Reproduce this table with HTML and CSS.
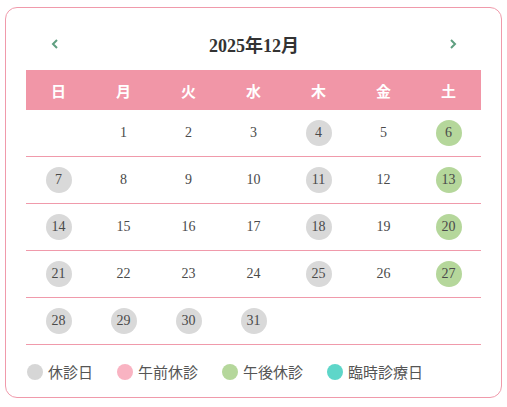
FILE: index.html
```html
<!DOCTYPE html>
<html lang="ja">
<head>
<meta charset="utf-8">
<link rel="stylesheet" href="styles.css">
</head>
<body>
<div class="card">
  <div class="title-row">
    <span class="nav"><svg width="10" height="12" viewBox="0 0 10 12"><path d="M7 2 L3 6 L7 10" fill="none" stroke="#5f9f80" stroke-width="2"/></svg></span>
    <span class="title">2025年12月</span>
    <span class="nav"><svg width="10" height="12" viewBox="0 0 10 12"><path d="M3 2 L7 6 L3 10" fill="none" stroke="#5f9f80" stroke-width="2"/></svg></span>
  </div>
  <table class="cal">
    <thead>
      <tr><th>日</th><th>月</th><th>火</th><th>水</th><th>木</th><th>金</th><th>土</th></tr>
    </thead>
    <tbody>
      <tr><td></td><td><span>1</span></td><td><span>2</span></td><td><span>3</span></td><td><span class="off">4</span></td><td><span>5</span></td><td><span class="pm">6</span></td></tr>
      <tr><td><span class="off">7</span></td><td><span>8</span></td><td><span>9</span></td><td><span>10</span></td><td><span class="off">11</span></td><td><span>12</span></td><td><span class="pm">13</span></td></tr>
      <tr><td><span class="off">14</span></td><td><span>15</span></td><td><span>16</span></td><td><span>17</span></td><td><span class="off">18</span></td><td><span>19</span></td><td><span class="pm">20</span></td></tr>
      <tr><td><span class="off">21</span></td><td><span>22</span></td><td><span>23</span></td><td><span>24</span></td><td><span class="off">25</span></td><td><span>26</span></td><td><span class="pm">27</span></td></tr>
      <tr><td><span class="off">28</span></td><td><span class="off">29</span></td><td><span class="off">30</span></td><td><span class="off">31</span></td><td></td><td></td><td></td></tr>
    </tbody>
  </table>
  <div class="legend">
    <span class="item"><i class="dot grey"></i>休診日</span>
    <span class="item"><i class="dot pink"></i>午前休診</span>
    <span class="item"><i class="dot green"></i>午後休診</span>
    <span class="item"><i class="dot teal"></i>臨時診療日</span>
  </div>
</div>
</body>
</html>
```

FILE: styles.css
```css
html, body { margin: 0; padding: 0; background: #fff; }
body { font-family: "Liberation Serif", "Noto Sans CJK JP", serif; color: #444; }
.card {
  margin: 7px 5px 0 5px;
  width: 497px;
  height: 391px;
  box-sizing: border-box;
  border: 1px solid #f09aab;
  border-radius: 12px;
  padding: 0 20px;
}
.title-row {
  display: flex;
  align-items: center;
  justify-content: space-between;
  height: 36px;
  margin-top: 18px;
  margin-bottom: 8px;
  padding: 0 23px 0 24px;
}
.nav { display: flex; width: 10px; height: 12px; }
.title { font-weight: bold; font-size: 18px; color: #333; }
.cal {
  width: 455px;
  border-collapse: collapse;
  table-layout: fixed;
}
.cal th {
  background: #f196a7;
  color: #fff;
  height: 40px;
  padding: 0;
  font-size: 15px;
  font-weight: bold;
}
.cal td {
  height: 46px;
  padding: 0;
  text-align: center;
  border-bottom: 1px solid #f09aab;
  font-size: 14px;
  color: #4a4a4a;
}
.cal td span {
  display: inline-flex;
  width: 26px;
  height: 26px;
  align-items: center;
  justify-content: center;
  border-radius: 50%;
  vertical-align: middle;
}
.cal td span.off { background: #d9d9d9; }
.cal td span.pm { background: #b5d79b; }
.legend {
  display: flex;
  align-items: center;
  gap: 24px;
  padding-top: 18px;
  padding-left: 1px;
  font-family: "Noto Sans CJK JP", sans-serif;
  font-size: 15px;
  color: #555;
  line-height: 18px;
}
.item { display: flex; align-items: center; gap: 5px; }
.dot { display: block; width: 16px; height: 16px; border-radius: 50%; }
.grey { background: #d6d6d6; }
.pink { background: #f9b3c2; }
.green { background: #b5d79b; }
.teal { background: #5ed6c9; }
```
